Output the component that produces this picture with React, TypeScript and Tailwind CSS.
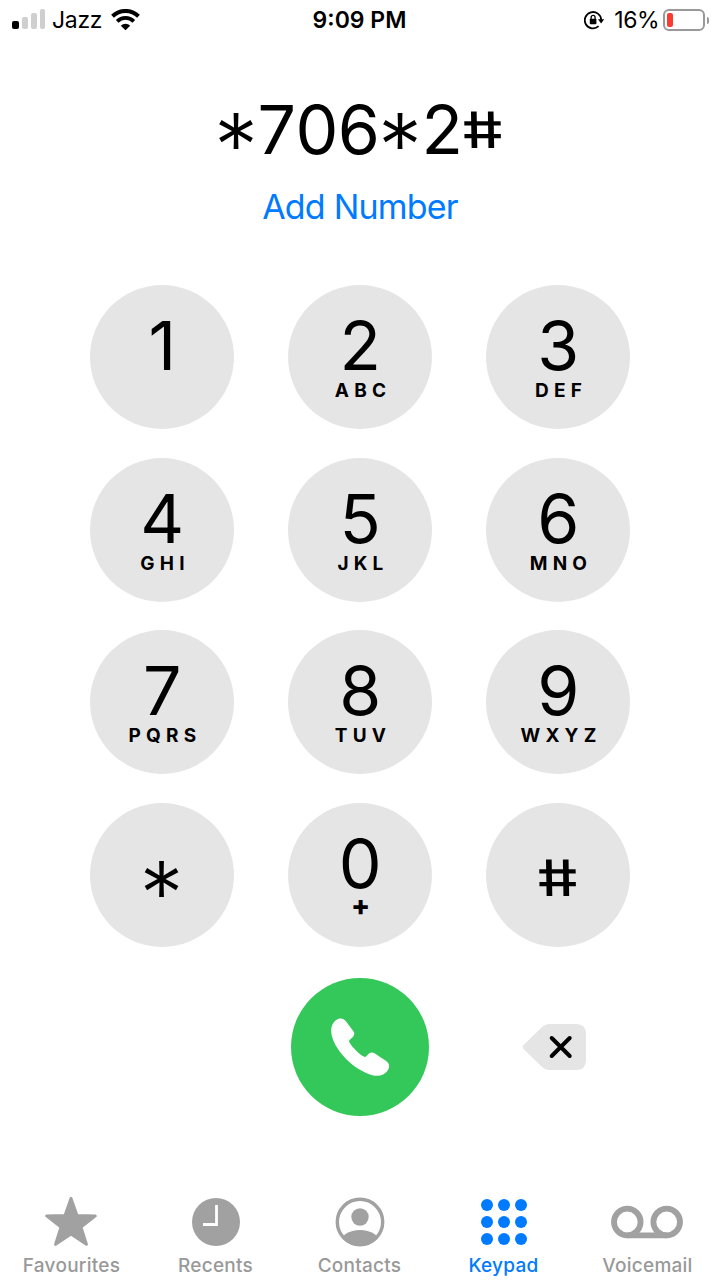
import clsx from "clsx";
import type { ReactNode } from "react";

type KeyDef = { digit: string; letters?: string };

const KEYS: KeyDef[] = [
  { digit: "1" },
  { digit: "2", letters: "ABC" },
  { digit: "3", letters: "DEF" },
  { digit: "4", letters: "GHI" },
  { digit: "5", letters: "JKL" },
  { digit: "6", letters: "MNO" },
  { digit: "7", letters: "PQRS" },
  { digit: "8", letters: "TUV" },
  { digit: "9", letters: "WXYZ" },
  { digit: "*" },
  { digit: "0", letters: "+" },
  { digit: "#" },
];

function DialChar({ char }: { char: string }) {
  if (char === "*") {
    return (
      <span className="flex h-[37px] w-[42px] items-center justify-center">
        <span className="-translate-x-[0.5px] translate-y-[15px] text-[88px] leading-none font-[340]">*</span>
      </span>
    );
  }
  if (char === "#") {
    return (
      <span className="flex h-[37px] w-[41px] items-center justify-center">
        <span className="-translate-x-[0.5px] skew-x-[10deg] scale-y-[0.76] text-[66px] leading-none font-medium">#</span>
      </span>
    );
  }
  return <span className="-translate-y-px text-[68px] leading-none tracking-[-0.5px]">{char}</span>;
}

function StatusBar() {
  return (
    <header className="grid h-10 grid-cols-3 items-center pr-[11px] pl-3 text-[23px] leading-none">
      <div className="flex items-center">
        <div className="flex -translate-y-px items-end gap-[3px]">
          <span className="h-2 w-[7px] rounded-[2px] bg-black" />
          <span className="h-3 w-[6px] rounded-[2px] bg-[#cfcfcf]" />
          <span className="h-4 w-[6px] rounded-[2px] bg-[#cfcfcf]" />
          <span className="h-5 w-[5px] rounded-[2px] bg-[#cfcfcf]" />
        </div>
        <span className="ml-[7px] tracking-[-0.3px]">Jazz</span>
        <svg className="ml-[9px] h-[22px] w-[29px]" viewBox="0 0 29 22" fill="none" stroke="#000">
          <path d="M1.500 7.200a18.700 18.700 0 0 1 26 0" strokeWidth="4" />
          <path d="M6.200 12.300a12 12 0 0 1 16.600 0" strokeWidth="3.8" />
          <path d="M14.500 21.300 9.800 16.700a6.800 6.800 0 0 1 9.400 0Z" fill="#000" stroke="none" />
        </svg>
      </div>
      <div className="-translate-x-px text-center font-semibold">9:09 PM</div>
      <div className="flex items-center justify-end">
        <svg className="h-5 w-5" viewBox="0 0 20 20" fill="none" stroke="#000" strokeWidth="1.8">
          <path d="M14.600 16.200A8.200 8.200 0 1 1 17.200 10" />
          <path d="M14 9.300h6.200L17.100 13.400Z" fill="#000" stroke="none" />
          <rect x="5.8" y="8.8" width="6.6" height="5.4" rx="0.8" fill="#000" stroke="none" />
          <path d="M7.100 9V7.400a2 2 0 0 1 4 0V9" strokeWidth="1.3" />
        </svg>
        <span className="ml-2.5 tracking-[-0.5px]">16%</span>
        <div className="ml-1 flex items-center gap-[2px]">
          <div className="h-[22px] w-[42px] rounded-[6px] border-2 border-[#999] p-[2px]">
            <div className="h-full w-[6px] rounded-[2px] bg-[#fb3b30]" />
          </div>
          <span className="h-[7px] w-[2px] rounded-r-full bg-[#999]" />
        </div>
      </div>
    </header>
  );
}

function KeyButton({ digit, letters }: KeyDef) {
  const isSymbol = digit === "*" || digit === "#";
  return (
    <button
      className={clsx(
        "flex size-36 flex-col items-center rounded-full bg-[#e5e5e5]",
        isSymbol ? "pt-14" : "pt-[27px]",
      )}
    >
      <DialChar char={digit} />
      {letters && (
        <span
          className={clsx(
            "leading-none",
            letters === "+"
              ? "-mt-[6px] pl-px text-[28px] font-extrabold"
              : "mt-[1px] pl-[6px] text-[19px] font-bold tracking-[5.2px]",
          )}
        >
          {letters}
        </span>
      )}
    </button>
  );
}

function TabItem({ label, active, children }: { label: string; active?: boolean; children: ReactNode }) {
  return (
    <button
      className={clsx(
        "flex w-36 flex-col items-center font-medium",
        active ? "text-[#007aff]" : "text-[#a1a1a1]",
      )}
    >
      <span className="flex h-[54px] items-center justify-center">{children}</span>
      <span
        className={clsx(
          "mt-[5px] text-[19px] leading-6 tracking-[0.25px]",
          !active && "text-[#999]",
        )}
      >
        {label}
      </span>
    </button>
  );
}

function TabBar() {
  return (
    <nav className="-ml-[0.5px] flex w-[720px]">
      <TabItem label="Favourites">
        <svg className="-ml-px h-[50px] w-[54px]" viewBox="0 0 54 50" fill="currentColor" stroke="currentColor" strokeWidth="3" strokeLinejoin="round">
          <path d="M27 1.500 33 18.600 51.300 18.900 37 30.100 42.400 47.300 27 36.900 11.600 47.300 17 30.100 2.700 18.900 21 18.600Z" />
        </svg>
      </TabItem>
      <TabItem label="Recents">
        <svg className="size-12" viewBox="0 0 48 48">
          <circle cx="24" cy="24" r="24" fill="currentColor" />
          <path d="M24.500 7v19.500H11" fill="none" stroke="#fff" strokeWidth="2.8" />
        </svg>
      </TabItem>
      <TabItem label="Contacts">
        <svg className="size-[50px]" viewBox="0 0 50 50">
          <clipPath id="avatar">
            <circle cx="25" cy="25" r="24" />
          </clipPath>
          <circle cx="25" cy="25" r="22.7" fill="none" stroke="currentColor" strokeWidth="3.4" />
          <circle cx="25" cy="20" r="8.7" fill="currentColor" />
          <ellipse cx="25" cy="46" rx="20" ry="13" fill="currentColor" clipPath="url(#avatar)" />
        </svg>
      </TabItem>
      <TabItem label="Keypad" active>
        <span className="ml-px grid grid-cols-3 gap-[4.5px]">
          {Array.from({ length: 9 }, (_, i) => (
            <span key={i} className="size-[12.5px] rounded-full bg-current" />
          ))}
        </span>
      </TabItem>
      <TabItem label="Voicemail">
        <svg className="-ml-px h-[34px] w-[72px]" viewBox="0 0 72 34" fill="none" stroke="currentColor" strokeWidth="5.8">
          <circle cx="16.3" cy="17" r="13.3" />
          <circle cx="55.7" cy="17" r="13.3" />
          <path d="M16 30.400h40" />
        </svg>
      </TabItem>
    </nav>
  );
}

export default function App() {
  return (
    <div className="flex h-[1280px] w-[720px] flex-col overflow-hidden bg-white font-['Inter','Liberation_Sans',sans-serif] text-black">
      <StatusBar />

      <section className="flex flex-col items-center pt-14">
        <div className="-ml-px flex h-[68px] items-center">
          {"*706*2#".split("").map((char, i) => (
            <DialChar key={i} char={char} />
          ))}
        </div>
        <button className="mt-[23px] text-[34px] leading-10 tracking-[-0.8px] text-[#007aff]">Add Number</button>
      </section>

      <main className="mt-[58px] grid grid-cols-3 gap-x-[54px] gap-y-[28.7px] self-center">
        {KEYS.map((key) => (
          <KeyButton key={key.digit} {...key} />
        ))}
      </main>

      <div className="mt-[31px] grid grid-cols-3 items-center gap-x-[54px] self-center">
        <span className="w-36" />
        <button className="flex size-[138px] items-center justify-center justify-self-center rounded-full bg-[#34c759]" aria-label="Call">
          <svg className="size-[60px]" viewBox="0 0 60 60" fill="#fff">
            <path d="M6 3C9.300.7 13.600.8 16.100 4.400L23.400 14.200C24.800 16.300 24.500 18.200 22.900 19.900L19.800 22.800C19 23.600 18.900 24.400 19.500 25.400C22.900 31 28.600 36.400 33.800 39.600C34.800 40.200 35.400 40.100 36.200 39.300L39 36.600C40.600 35.200 42.500 35 44.500 36.300L55.800 43.800C59.500 46.400 60.200 49.900 57.700 53.500C54.200 58.600 48.300 60 41.400 57.900C23.500 52.200 6.500 35.200 2 19.500C.2 12.900 1.200 6.800 6 3Z" />
          </svg>
        </button>
        <button className="ml-9 w-16" aria-label="Delete">
          <svg className="h-[46px] w-16" viewBox="0 0 64 46">
            <path d="M1.500 21 19.500 3.500Q23 0 28 0H54Q64 0 64 10V36Q64 46 54 46H28Q23 46 19.500 42.500L1.500 25Q-.5 23 1.500 21Z" fill="#e5e5e5" />
            <path d="m29.700 14 18 18m0-18-18 18" stroke="#000" strokeWidth="4" strokeLinecap="round" />
          </svg>
        </button>
      </div>

      <footer className="mt-auto pb-[2px]">
        <TabBar />
      </footer>
    </div>
  );
}
